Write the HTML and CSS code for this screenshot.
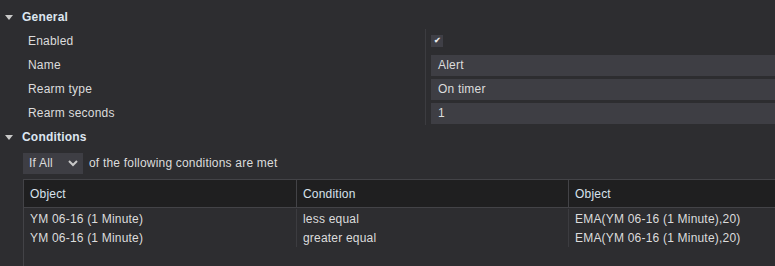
FILE: index.html
```html
<!DOCTYPE html>
<html lang="en">
<head>
  <meta charset="UTF-8" />
  <title>Alert properties</title>
  <link rel="stylesheet" href="styles.css">
</head>
<body>

  <div class="section-head">
    <span class="caret"></span>
    <span class="section-title">General</span>
  </div>

  <div class="props">
    <div class="prop-label">Enabled</div>
    <div class="prop-value"><span class="check">&#10004;</span></div>
    <div class="prop-label">Name</div>
    <div class="prop-value"><div class="field">Alert</div></div>
    <div class="prop-label">Rearm type</div>
    <div class="prop-value"><div class="field">On timer</div></div>
    <div class="prop-label">Rearm seconds</div>
    <div class="prop-value"><div class="field">1</div></div>
  </div>

  <div class="section-head">
    <span class="caret"></span>
    <span class="section-title">Conditions</span>
  </div>

  <div class="conditions">
    <div class="match-line">
      <div class="select">
        <span>If All</span>
        <svg class="chevron" width="10" height="7" viewBox="0 0 10 7">
          <path d="M1 1 L5 5 L9 1" fill="none" stroke="#c8c8c8" stroke-width="2"/>
        </svg>
      </div>
      <span class="match-text">of the following conditions are met</span>
    </div>

    <div class="grid">
      <div class="grid-head">
        <div class="cell c1">Object</div>
        <div class="cell c2">Condition</div>
        <div class="cell c3">Object</div>
      </div>
      <div class="grid-body">
        <div class="grid-row">
          <div class="cell c1">YM 06-16 (1 Minute)</div>
          <div class="cell c2">less equal</div>
          <div class="cell c3">EMA(YM 06-16 (1 Minute),20)</div>
        </div>
        <div class="grid-row">
          <div class="cell c1">YM 06-16 (1 Minute)</div>
          <div class="cell c2">greater equal</div>
          <div class="cell c3">EMA(YM 06-16 (1 Minute),20)</div>
        </div>
      </div>
    </div>
  </div>

</body>
</html>
```

FILE: styles.css
```css
* {
  box-sizing: border-box;
}

body {
  margin: 0;
  background: #2d2d30;
  color: #dcdcdc;
  font-family: 'Liberation Sans', Arial, sans-serif;
  font-size: 12px;
  letter-spacing: 0.2px;
  height: 266px;
  overflow: hidden;
}

.section-head {
  display: flex;
  align-items: center;
  height: 24px;
  padding-left: 5px;
}

.section-head:first-child {
  margin-top: 5px;
}

.caret {
  width: 0;
  height: 0;
  border-left: 4px solid transparent;
  border-right: 4px solid transparent;
  border-top: 5px solid #c8c8c8;
  margin-right: 9px;
}

.section-title {
  font-weight: bold;
  color: #dde6f0;
}

.props {
  display: grid;
  grid-template-columns: 425px 1fr;
  grid-auto-rows: 24px;
  margin-top: -2px;
  padding-top: 2px;
}

.prop-label {
  padding-left: 28px;
  display: flex;
  align-items: center;
}

.prop-value {
  border-left: 1px solid #3c3c40;
  padding-left: 5px;
  display: flex;
  align-items: center;
}

.props .prop-value:nth-child(2) {
  align-items: flex-start;
  padding-top: 6px;
}

.check {
  width: 12px;
  height: 12px;
  background: #3f3f46;
  color: #e8e8e8;
  font-size: 8px;
  font-weight: bold;
  line-height: 12px;
  text-align: center;
  letter-spacing: 0;
}

.field {
  flex: 1;
  height: 21px;
  background: #3e3e44;
  padding-left: 7px;
  display: flex;
  align-items: center;
}

.conditions {
  padding-left: 23px;
}

.match-line {
  display: flex;
  align-items: center;
  margin-top: 3px;
  height: 22px;
}

.select {
  width: 60px;
  height: 21px;
  background: #3e3e44;
  display: flex;
  align-items: center;
  justify-content: space-between;
  padding: 0 3px 0 6px;
  margin-right: 6px;
}

.chevron {
  margin-right: 2px;
}

.grid {
  margin-top: 5px;
  border-top: 1px solid #434347;
  border-left: 1px solid #434347;
  height: 90px;
}

.grid-head {
  display: flex;
  height: 28px;
  background: #1f1f20;
  border-bottom: 1px solid #434347;
}

.grid-head .cell {
  display: flex;
  align-items: center;
  color: #d8e2ec;
}

.grid-head .c2,
.grid-head .c3 {
  border-left: 1px solid #434347;
}

.grid-body {
  padding-top: 1px;
}

.grid-row {
  display: flex;
  height: 19px;
}

.grid-row .cell {
  display: flex;
  align-items: center;
}

.grid-row .c2,
.grid-row .c3 {
  border-left: 1px solid #3c3c40;
}

.cell {
  padding-left: 6px;
}

.c1 {
  width: 272px;
}

.c2 {
  width: 272px;
}

.c3 {
  flex: 1;
}
```
